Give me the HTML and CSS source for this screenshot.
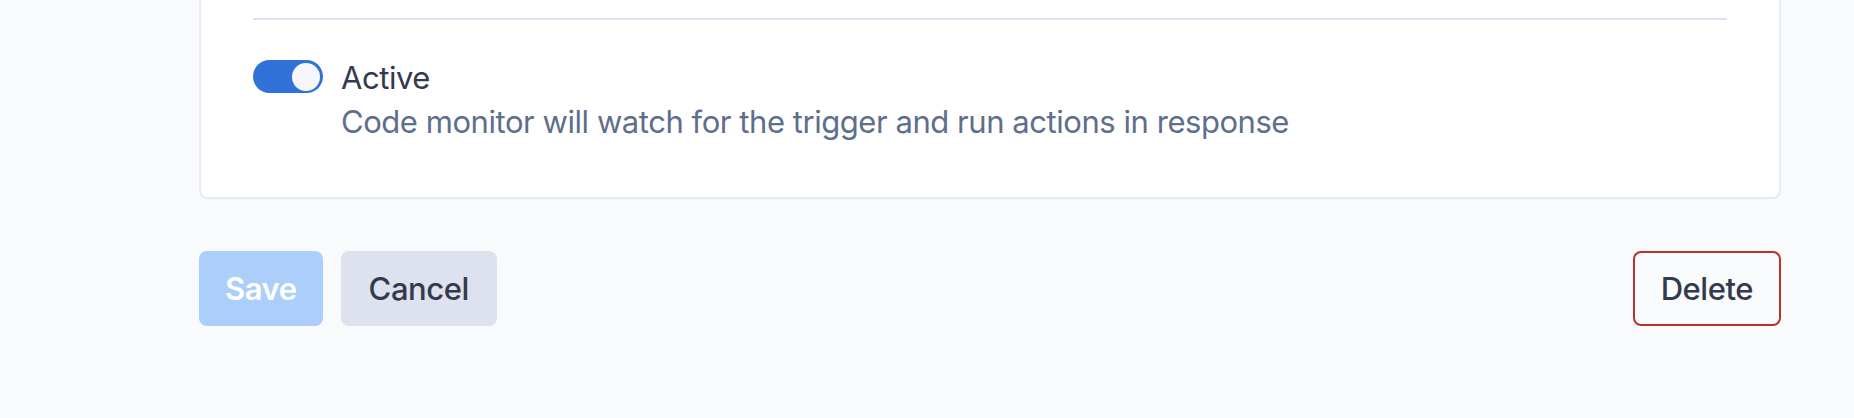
FILE: index.html
```html
<!DOCTYPE html>
<html lang="en">
<head>
<meta charset="utf-8">
<title>Code monitor</title>
<link rel="stylesheet" href="styles.css">
</head>
<body>
<div class="page">
  <div class="card">
    <hr class="divider">
    <div class="toggle-row">
      <span class="toggle" role="switch" aria-checked="true"><span class="knob"></span></span>
      <div class="toggle-text">
        <div class="label">Active</div>
        <div class="desc">Code monitor will watch for the trigger and run actions in response</div>
      </div>
    </div>
  </div>
  <div class="actions">
    <div class="actions-left">
      <button class="btn btn-primary" disabled>Save</button>
      <button class="btn btn-secondary">Cancel</button>
    </div>
    <button class="btn btn-danger-outline">Delete</button>
  </div>
</div>
</body>
</html>
```
FILE: styles.css
```css
html, body {
  margin: 0;
  padding: 0;
}
body {
  background: #f9fafb;
  font-family: Inter, "Noto Sans", "Liberation Sans", sans-serif;
  font-size: 31px;
  line-height: 44px;
  letter-spacing: -0.45px;
  color: #343a4d;
}
.page {
  padding: 0 73px 0 199px;
}
.card {
  background: #ffffff;
  border: 2px solid #e6ebf2;
  border-top: 0;
  border-radius: 0 0 8px 8px;
  padding: 18px 52px 53px;
}
.divider {
  margin: 0;
  border: 0;
  height: 2px;
  background: #dde2ef;
}
.toggle-row {
  display: flex;
  align-items: flex-start;
  gap: 18px;
  margin-top: 36px;
}
.toggle {
  flex: none;
  display: flex;
  justify-content: flex-end;
  align-items: center;
  width: 70px;
  height: 33px;
  margin-top: 4px;
  padding: 0 3px;
  box-sizing: border-box;
  border-radius: 16.5px;
  background: #3072d7;
}
.knob {
  width: 28px;
  height: 28px;
  border-radius: 50%;
  background: #f5f7fa;
}
.label {
  color: #343a4d;
}
.desc {
  color: #5e6e8c;
}
.actions {
  display: flex;
  justify-content: space-between;
  align-items: center;
  margin-top: 52px;
}
.actions-left {
  display: flex;
  gap: 18px;
}
.btn {
  font-family: inherit;
  font-size: 31px;
  line-height: 44px;
  letter-spacing: -0.45px;
  padding: 13.5px 26px;
  border: 2px solid transparent;
  border-radius: 8px;
  font-weight: 500;
  color: #343a4d;
  background: transparent;
  cursor: pointer;
}
.btn-primary {
  padding-left: 24px;
  padding-right: 24px;
  background: #abcefa;
  border-color: #abcefa;
  color: #ffffff;
  font-weight: 600;
}
.btn-secondary {
  background: #dde2ee;
  border-color: #dde2ee;
}
.btn-danger-outline {
  border-color: #b7322c;
}
```
